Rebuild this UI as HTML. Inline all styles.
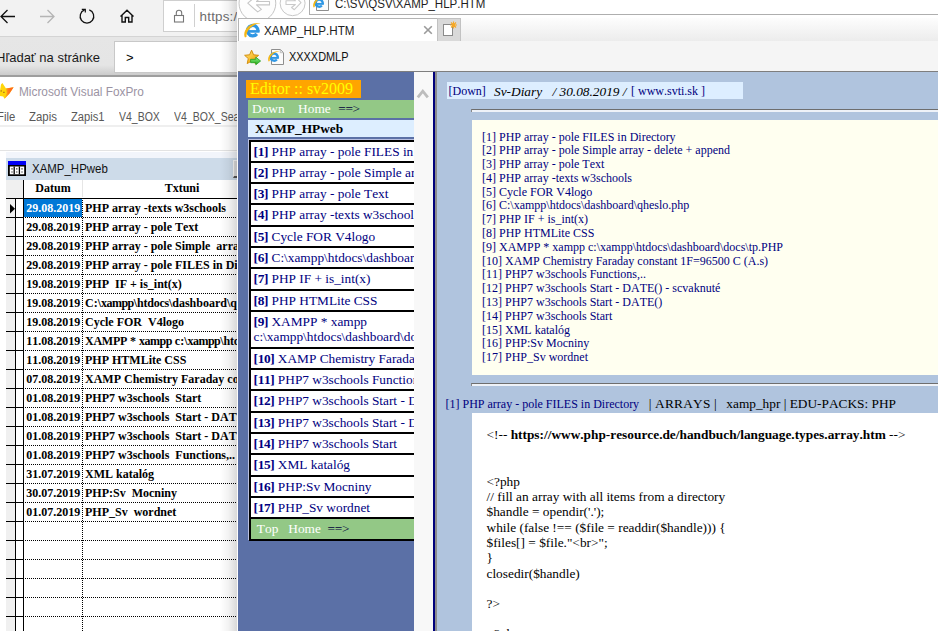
<!DOCTYPE html>
<html lang="sk">
<head>
<meta charset="utf-8">
<title>XAMP_HLP.HTM</title>
<style>
*{box-sizing:border-box;margin:0;padding:0;font-kerning:none!important}
html,body{width:938px;height:631px;overflow:hidden;background:#fff}
body{font-kerning:none;font-variant-ligatures:none;position:relative;font-family:"Liberation Sans",sans-serif;font-size:12px;color:#000}
.abs{position:absolute}
.ser{font-family:"Liberation Serif",serif}
/* ---------- Edge browser (background) ---------- */
#edgebar{left:0;top:0;width:938px;height:36px;background:#f2f2f2}
#edgeline{left:0;top:36px;width:938px;height:1px;background:#d4d4d4}
#addr{left:163px;top:0;width:200px;height:32px;background:#fff;border:1px solid #cfcfcf}
#addrdiv{left:194px;top:4px;width:1px;height:23px;background:#d0d0d0}
#https{left:199.6px;top:6.6px;font-size:13.4px;letter-spacing:.2px;line-height:20px;color:#6c6c6c;white-space:nowrap}
#findbar{left:0;top:37px;width:938px;height:39px;background:linear-gradient(#e6e6e6 0,#e5e5e5 72%,#c9c9c9 100%)}
#findline{left:0;top:75.4px;width:938px;height:1.3px;background:#9e9e9e}
#findlbl{left:-4px;top:50px;font-size:13px;line-height:16px;color:#1a1a1a;white-space:nowrap}
#findbox{left:114px;top:41px;width:300px;height:32px;background:#fff;border:1px solid #c8c8c8}
#findgt{left:126px;top:50px;font-size:13px;line-height:16px;color:#000}
/* ---------- FoxPro ---------- */
#foxtitle{left:19px;top:84px;transform-origin:0 50%;transform:scaleX(.985);font-size:12px;line-height:16px;color:#9b93a3;white-space:nowrap}
#foxmenu{left:0;top:109px;font-size:12px;line-height:16px;color:#585858;white-space:nowrap}
#foxmenu span{position:absolute;top:0;transform-origin:0 50%}
#menuline{left:0;top:125px;width:938px;height:2px;background:#efefef}
#mdiline{left:0;top:150px;width:938px;height:1px;background:#e3e3e3}
#childtitle{left:6px;top:158px;width:300px;height:22px;background:#cddbe9}
#childglow{left:6px;top:152px;width:300px;height:6px;background:#f2f5fb}
#childbtn{left:233px;top:160px;width:20px;height:18px;background:#dcdcdc;border:1px solid #f8f8f8;border-bottom:2px solid #555}
#childname{left:32px;top:161px;font-size:12px;transform-origin:0 50%;transform:scaleX(.955);line-height:16px;color:#111;white-space:nowrap}
#grid{left:6px;top:180px;width:300px;height:451px;background:#fff}
#ghead{left:0;top:0;width:300px;height:19px;background:#fff;border-bottom:1.4px solid #000}
#gheadm{left:0;top:0;width:17px;height:18px;background:#f0f0f0}
#gheadv{left:76px;top:0;width:1px;height:17px;background:#e6e6e6}
.gh{position:absolute;top:0;height:17px;font:bold 12px/17px "Liberation Serif",serif;text-align:center}
.row{position:absolute;left:0;width:300px;height:19px;border-bottom:1px dotted #000;font:bold 12px/18px "Liberation Serif",serif;white-space:pre}
.row .m{position:absolute;left:0;top:0;width:10px;height:19px;background:#f0f0f0;border-bottom:1px solid #000;border-right:1px solid #000}
.row .m2{position:absolute;left:10px;top:0;width:8px;height:19px;background:#fff;border-bottom:1px solid #000}
.row .d{position:absolute;left:18px;top:0;width:58px;height:18px;padding-left:2.3px}
.row .t{position:absolute;left:79px;top:0;height:18px}
#vl1{left:22.6px;top:180px;width:1.5px;height:451px;background:#000}
#vl2{left:82px;top:198px;width:0;height:433px;border-left:1px dotted #000}
#vl2h{left:82px;top:180px;width:1px;height:18px;background:#fff}
/* ---------- IE window ---------- */
#ieshadow{left:220px;top:0;width:17px;height:631px;background:linear-gradient(90deg,rgba(0,0,0,0),rgba(0,0,0,.05) 50%,rgba(0,0,0,.15))}
#ie{left:237px;top:0;width:701px;height:631px;background:#fff;border-left:1px solid #fbfbfb;overflow:hidden}
#ie .abs{position:absolute}
#ienav{left:0;top:0;width:701px;height:18px;background:#fff}
#ieaddr{left:71px;top:-6px;width:640px;height:21px;background:#fff;border:1px solid #aeaeae}
#ieurl{left:97px;top:-4.4px;font-size:12px;line-height:16px;transform-origin:0 50%;transform:scaleX(.96);color:#1e1e1e;white-space:nowrap}
#ietabrow{left:0;top:18px;width:701px;height:23px;background:linear-gradient(#fdfdfd,#ececec)}
#ietab{left:0;top:18px;width:200px;height:23px;background:#fff;border:1px solid #b4b4b4;border-bottom:0}
#ietabtxt{left:26px;top:23.7px;font-size:12px;transform-origin:0 50%;transform:scaleX(.97);line-height:15px;color:#222;white-space:nowrap}
#ienewtab{left:199px;top:18px;width:24px;height:23px;background:#d9d9d9;border:1px solid #c2c2c2;border-bottom:0}
#iefav{left:0;top:41px;width:701px;height:31px;background:#f5f5f5}
#iefavtxt{left:51px;top:49.7px;font-size:12px;transform-origin:0 50%;transform:scaleX(.91);line-height:15px;color:#111;white-space:nowrap}
#iecline{left:0;top:71px;z-index:5;width:701px;height:1px;background:#7e7e7e}
#lf{left:-1px;top:71px;width:177px;height:560px;background:#5b70a6;overflow:hidden}
#lfed{left:9px;top:9px;width:115px;height:18px;background:#ffa500;color:#ffff00;font-size:16px;line-height:17px;padding-left:4px;white-space:nowrap}
#lfnav{left:11px;top:29px;width:170px;height:18px;background:#93c886;color:#fff;font-size:13.33px;line-height:17px;padding-left:4px;white-space:nowrap}
#lfnav b{font-weight:normal;color:#00003a;letter-spacing:-.3px}
#lfttl{left:11px;top:49px;width:170px;height:17px;background:#ddeeff;color:#000;font-weight:bold;font-size:13.33px;line-height:17px;padding-left:7px;white-space:nowrap}
#lftbl{left:12px;top:68.5px;width:170px;border-top:2px solid #000;border-left:2px solid #000;background:#000;box-shadow:-1px -1px 0 #b9bfe0}
.lr{background:#fff;border-bottom:2px solid #000;padding:2px 0 2px 2.5px;font-size:13.33px;line-height:15.33px;color:#000080;white-space:nowrap;overflow:hidden;height:21.33px}
.lr.two{height:36.67px}
.lr b{letter-spacing:-.3px}
.lr.g{background:#93c886;color:#fff}
.lr.g b{font-weight:normal;color:#00003a;letter-spacing:-.3px}
#lfsb{left:176px;top:71px;width:19px;height:560px;background:#f8f8f8}
#frsep1{left:195px;top:71px;width:2px;height:560px;background:#00007c}
#frsep2{left:197px;top:71px;width:2px;height:560px;background:#8c8c8c}
#rf{left:199px;top:71px;width:502px;height:560px;background:#b0c4de;overflow:hidden}
.nv{color:#000080}
#rfh1{left:10px;top:11px;width:296px;height:17px;background:#ddeeff;font-size:12px;line-height:19px;white-space:nowrap}
#rfh1 span,#rfh1 i{position:absolute;top:0}
#rfh1 i{font-size:13.33px}
.hr{left:34px;width:470px;height:3px;border-top:1px solid #6e6e6e;border-left:1px solid #8a8a8a;background:#eef2f8}
#rflist{left:35px;top:49px;width:470px;height:255px;background:#fffff0;color:#000080;font-size:12px;line-height:13.79px;padding:10.5px 0 0 10px;white-space:nowrap}
#rfh2{left:8.5px;top:325px;font-size:13.33px;line-height:16px;white-space:nowrap}
.s12{font-size:12px}
#rfcode{left:35px;top:341.5px;width:470px;height:300px;background:#fff;font-size:13.33px;line-height:15.33px;padding:14px 0 0 14.5px;white-space:pre}
#rfcode .l1{display:block;height:16.5px}

</style>
</head>
<body>
<!-- Edge toolbar -->
<div id="edgebar" class="abs"></div>
<div id="edgeline" class="abs"></div>
<svg class="abs" style="left:0;top:0" width="160" height="36" viewBox="0 0 160 36" fill="none">
  <path d="M15 16.5H1.2M7.5 10L1 16.5L7.5 23" stroke="#111" stroke-width="1.3"/>
  <path d="M40 16.5H54M47.5 10L54 16.5L47.5 23" stroke="#b5b5b5" stroke-width="1.3"/>
  <path d="M89.3 9.9A6.8 6.8 0 1 1 84.6 9.9" stroke="#111" stroke-width="1.3"/>
  <path d="M81.8 9.3H85.3V12.6" stroke="#111" stroke-width="1.2"/>
  <path d="M120.5 16.5L127 10.3L133.5 16.5M122 15.5V22H125.3V17.5H128.7V22H132V15.5" stroke="#111" stroke-width="1.4"/>
</svg>
<div id="addr" class="abs"></div>
<svg class="abs" style="left:172px;top:8px" width="14" height="16" viewBox="0 0 14 16" fill="none">
  <rect x="2.5" y="7.5" width="9" height="6.5" stroke="#777" stroke-width="1.1"/>
  <path d="M4.3 7.5V5A2.7 2.7 0 0 1 9.7 5V7.5" stroke="#777" stroke-width="1.1"/>
</svg>
<div id="addrdiv" class="abs"></div>
<div id="https" class="abs">https://</div>
<!-- Find bar -->
<div id="findbar" class="abs"></div>
<div id="findline" class="abs"></div>
<div id="findlbl" class="abs">Hľadať na stránke</div>
<div id="findbox" class="abs"></div>
<div id="findgt" class="abs">&gt;</div>
<!-- FoxPro -->
<svg class="abs" style="left:0;top:80px" width="16" height="22" viewBox="0 0 16 22">
  <defs><linearGradient id="fx" x1="0" y1="0" x2="1" y2="0"><stop offset="0" stop-color="#ffc414"/><stop offset=".45" stop-color="#ff7a1c"/><stop offset="1" stop-color="#ff5a1a"/></linearGradient></defs>
  <path d="M0 10.5L1 4.6L2.4 3L6 8.6L13.6 7.3L9.5 13.5L4.5 18.7L3.2 16.6L0 16Z" fill="#ffd60a"/>
  <path d="M6 8.6L13.6 7.3L9.5 13.5L4.5 18.7L6.8 13Z" fill="url(#fx)"/>
  <path d="M1.2 10.3V11.6M3.2 12.3H4.6" stroke="#8a4a2a" stroke-width=".9"/>
</svg>
<div id="foxtitle" class="abs">Microsoft Visual FoxPro</div>
<div id="foxmenu" class="abs"><span style="left:-3.5px;transform:scaleX(.94)">File</span><span style="left:28.5px;transform:scaleX(.95)">Zapis</span><span style="left:70.5px;transform:scaleX(.93)">Zapis1</span><span style="left:119px;transform:scaleX(.875)">V4_BOX</span><span style="left:174px;transform:scaleX(.875)">V4_BOX_Search</span></div>
<div id="menuline" class="abs"></div>
<div id="mdiline" class="abs"></div>
<div id="childglow" class="abs"></div><div id="childtitle" class="abs"></div><div id="childbtn" class="abs"></div>
<svg class="abs" style="left:8px;top:161px" width="18" height="15" viewBox="0 0 18 15">
  <rect x="0" y="0" width="18" height="15" fill="#000"/>
  <rect x="0" y="0" width="18" height="4" fill="#0000f6"/>
  <rect x="1.8" y="5.5" width="14.4" height="7.8" fill="#fff"/>
  <path d="M6.2 5.5V13.3M11.4 5.5V13.3" stroke="#000" stroke-width="1.3"/>
  <path d="M4 7.2V8.4M4 10.4V11.6M8.8 7.2V8.4M8.8 10.4V11.6M14 7.2V8.4M14 10.4V11.6" stroke="#000" stroke-width="1.1"/>
</svg>
<div id="childname" class="abs">XAMP_HPweb</div>
<div id="grid" class="abs">
  <div id="ghead" class="abs"></div><div id="gheadm" class="abs"></div><div id="gheadv" class="abs"></div>
  <div class="gh" style="left:18px;width:58px">Datum</div>
  <div class="gh" style="left:77px;width:198px">Txtuni</div>
  <div class="row" style="top:19px"><div class="m"></div><div class="m2"></div><svg class="abs" style="left:4px;top:5px" width="6" height="10" viewBox="0 0 6 10"><path d="M0 0L5 4.7L0 9.4Z" fill="#000"/></svg><div class="d" style="background:#0078d7;color:#fff">29.08.2019</div><div class="t">PHP array -texts w3schools</div></div>
  <div class="row" style="top:38px"><div class="m"></div><div class="m2"></div><div class="d">29.08.2019</div><div class="t">PHP array - pole Text</div></div>
  <div class="row" style="top:57px"><div class="m"></div><div class="m2"></div><div class="d">29.08.2019</div><div class="t">PHP array - pole Simple  array - delete + append</div></div>
  <div class="row" style="top:76px"><div class="m"></div><div class="m2"></div><div class="d">29.08.2019</div><div class="t">PHP array - pole FILES in Directory</div></div>
  <div class="row" style="top:95px"><div class="m"></div><div class="m2"></div><div class="d">19.08.2019</div><div class="t">PHP  IF + is_int(x)</div></div>
  <div class="row" style="top:114px"><div class="m"></div><div class="m2"></div><div class="d">19.08.2019</div><div class="t">C:\<span style="letter-spacing:-.52px">xampp</span>\<span style="letter-spacing:-.25px">htdocs</span>\dashboard\qheslo.php</div></div>
  <div class="row" style="top:133px"><div class="m"></div><div class="m2"></div><div class="d">19.08.2019</div><div class="t">Cycle FOR  V4logo</div></div>
  <div class="row" style="top:152px"><div class="m"></div><div class="m2"></div><div class="d">11.08.2019</div><div class="t"><span style="letter-spacing:-.25px">XAMPP</span> * <span style="letter-spacing:-.52px">xampp</span> c:\<span style="letter-spacing:-.52px">xampp</span>\<span style="letter-spacing:-.25px">htdocs</span>\dashboard\docs\tp.PHP</div></div>
  <div class="row" style="top:171px"><div class="m"></div><div class="m2"></div><div class="d">11.08.2019</div><div class="t">PHP HTMLite CSS</div></div>
  <div class="row" style="top:190px"><div class="m"></div><div class="m2"></div><div class="d">07.08.2019</div><div class="t">XAMP Chemistry Faraday constant 1F=96500 C (A.s)</div></div>
  <div class="row" style="top:209px"><div class="m"></div><div class="m2"></div><div class="d">01.08.2019</div><div class="t">PHP7 w3schools  Start</div></div>
  <div class="row" style="top:228px"><div class="m"></div><div class="m2"></div><div class="d">01.08.2019</div><div class="t">PHP7 w3schools  Start - DATE() - scvaknuté</div></div>
  <div class="row" style="top:247px"><div class="m"></div><div class="m2"></div><div class="d">01.08.2019</div><div class="t">PHP7 w3schools  Start - DATE()</div></div>
  <div class="row" style="top:266px"><div class="m"></div><div class="m2"></div><div class="d">01.08.2019</div><div class="t">PHP7 w3schools  Functions,..</div></div>
  <div class="row" style="top:285px"><div class="m"></div><div class="m2"></div><div class="d">31.07.2019</div><div class="t">XML katalóg</div></div>
  <div class="row" style="top:304px"><div class="m"></div><div class="m2"></div><div class="d">30.07.2019</div><div class="t">PHP:Sv  Mocniny</div></div>
  <div class="row" style="top:323px"><div class="m"></div><div class="m2"></div><div class="d">01.07.2019</div><div class="t">PHP_Sv  wordnet</div></div>
  <div class="row" style="top:342px"><div class="m"></div><div class="m2"></div><div class="d"></div><div class="t"></div></div>
  <div class="row" style="top:361px"><div class="m"></div><div class="m2"></div><div class="d"></div><div class="t"></div></div>
  <div class="row" style="top:380px"><div class="m"></div><div class="m2"></div><div class="d"></div><div class="t"></div></div>
  <div class="row" style="top:399px"><div class="m"></div><div class="m2"></div><div class="d"></div><div class="t"></div></div>
  <div class="row" style="top:418px"><div class="m"></div><div class="m2"></div><div class="d"></div><div class="t"></div></div>
  <div class="row" style="top:437px"><div class="m"></div><div class="m2"></div><div class="d"></div><div class="t"></div></div>
  <div class="row" style="top:456px"><div class="m"></div><div class="m2"></div><div class="d"></div><div class="t"></div></div>
</div>
<div id="vl1" class="abs"></div>
<div id="vl2" class="abs"></div>
<!-- ================= IE window ================= -->
<div id="ieshadow" class="abs"></div>
<div id="ie" class="abs">
  <!-- nav strip -->
  <div id="ienav" class="abs"></div>
  <svg class="abs" style="left:-1px;top:0" width="75" height="24" viewBox="0 0 75 24" fill="none">
    <circle cx="20.4" cy="3.2" r="18.4" fill="#fdfdfd" stroke="#c4c4c4" stroke-width="1"/>
    <path d="M10.8 3.2L20.7 11.9L24.4 9.4L19.5 4.9H32.5V1.5H19.5L24.4 -3L20.7 -5.5Z" fill="#fff" stroke="#c6c6c6" stroke-width="1.1" stroke-linejoin="round"/>
    <circle cx="55.6" cy="3.2" r="12.5" fill="#fdfdfd" stroke="#c8c8c8" stroke-width="1"/>
    <path d="M64 2.6L57.3 9.7L54.6 7.5L58.4 4.5H49V0.7H58.4L54.6 -2.3L57.3 -4.5Z" fill="#fff" stroke="#cacaca" stroke-width="1.1" stroke-linejoin="round"/>
  </svg>
  <div id="ieaddr" class="abs"></div>
  <svg class="abs" style="left:75px;top:-6px" width="18" height="18" viewBox="0 0 18 18" fill="none"><path d="M3.5 1.5H12.3L15.5 4.7V16.5H3.5Z" fill="#fbfbfb" stroke="#8e8e8e"/><path d="M9.60 9.90A3.6 3.6 0 1 0 8.84 11.42" stroke="#2f97e4" stroke-width="2.4" fill="none"/><path d="M3.00 9.90H10.80" stroke="#2f97e4" stroke-width="1.92" fill="none"/><path d="M0.6 13.6C-1.8 8.4 5 2 11.4 3.5C6.4 3.6 1 8.4 1.8 13Z" fill="#f5b716"/></svg>
  <div id="ieurl" class="abs">C:\SV\QSV\XAMP_HLP.HTM</div>
  <!-- tab row -->
  <div id="ietabrow" class="abs"></div>
  <div id="ietab" class="abs"></div>
  <svg class="abs" style="left:6px;top:21px" width="18" height="18" viewBox="0 0 18 18" fill="none"><path d="M13.90 10.40A5.2 5.2 0 1 0 12.80 12.90" stroke="#2f97e4" stroke-width="3.3" fill="none"/><path d="M4.10 10.40H15.55" stroke="#2f97e4" stroke-width="2.64" fill="none"/><path d="M1 16.6C-2.6 9.6 7 0 16.6 2.2C9.6 2.2 1.6 9.4 2.6 15.8Z" fill="#f5b716"/></svg>
  <div id="ietabtxt" class="abs">XAMP_HLP.HTM</div>
  <svg class="abs" style="left:185px;top:25px" width="10" height="10" viewBox="0 0 10 10"><path d="M1.2 1.2L8.8 8.8M8.8 1.2L1.2 8.8" stroke="#9a9a9a" stroke-width="1.6"/></svg>
  <div id="ienewtab" class="abs"></div>
  <svg class="abs" style="left:204px;top:21px" width="16" height="16" viewBox="0 0 16 16" fill="none">
    <rect x="1.5" y="3.5" width="9" height="11" fill="#fff" stroke="#8a8a8a"/>
    <path d="M11.5 0.5V7.5M8 4H15M9 1.5L14 6.5M14 1.5L9 6.5" stroke="#f7a823" stroke-width="1.1"/>
  </svg>
  <!-- favorites bar -->
  <div id="iefav" class="abs"></div>
  <svg class="abs" style="left:6px;top:49px" width="18" height="17" viewBox="0 0 18 17" fill="none"><defs><linearGradient id="sg" x1="0" y1="0" x2="1" y2="1"><stop offset="0" stop-color="#ffe98a"/><stop offset=".55" stop-color="#f9bd2c"/><stop offset="1" stop-color="#e08a0a"/></linearGradient><linearGradient id="gg" x1="0" y1="0" x2="0" y2="1"><stop offset="0" stop-color="#8df07f"/><stop offset="1" stop-color="#1faa1c"/></linearGradient></defs><path d="M7.6 1.2L9.6 5.8L14.6 6.3L10.9 9.6L12 14.6L7.6 12L3.2 14.6L4.3 9.6L0.6 6.3L5.6 5.8Z" fill="url(#sg)" stroke="#d4900f" stroke-width="1" stroke-linejoin="round"/><path d="M6.6 10.3H11.8V8.2L16.6 12L11.8 15.8V13.7H6.6Z" fill="url(#gg)" stroke="#23a021" stroke-width="0.8" stroke-linejoin="round"/></svg>
  <svg class="abs" style="left:30px;top:48px" width="18" height="18" viewBox="0 0 18 18" fill="none"><path d="M3.5 1.5H12.3L15.5 4.7V16.5H3.5Z" fill="#fbfbfb" stroke="#8e8e8e"/><path d="M12.3 1.5V4.7H15.5" stroke="#b0b0b0" stroke-width=".8"/><path d="M9.60 9.90A3.6 3.6 0 1 0 8.84 11.42" stroke="#2f97e4" stroke-width="2.4" fill="none"/><path d="M3.00 9.90H10.80" stroke="#2f97e4" stroke-width="1.92" fill="none"/><path d="M0.6 13.6C-1.8 8.4 5 2 11.4 3.5C6.4 3.6 1 8.4 1.8 13Z" fill="#f5b716"/></svg>
  <div id="iefavtxt" class="abs">XXXXDMLP</div>
  <div id="iecline" class="abs"></div>
  <!-- left frame -->
  <div id="lf" class="abs">
    <div id="lfed" class="abs ser">Editor :: sv2009</div>
    <div id="lfnav" class="abs ser">Down<span style="margin-left:13.5px">Home</span><b style="margin-left:7.5px">==&gt;</b></div>
    <div id="lfttl" class="abs ser">XAMP_HPweb</div>
    <div id="lftbl" class="abs ser">
<div class="lr"><b>[1]</b> PHP array - pole FILES in Directory</div>
<div class="lr"><b>[2]</b> PHP array - pole Simple array - delete + append</div>
<div class="lr"><b>[3]</b> PHP array - pole Text</div>
<div class="lr"><b>[4]</b> PHP array -texts w3schools</div>
<div class="lr"><b>[5]</b> Cycle FOR V4logo</div>
<div class="lr"><b>[6]</b> C:\xampp\htdocs\dashboard\qheslo.php</div>
<div class="lr"><b>[7]</b> PHP IF + is_int(x)</div>
<div class="lr"><b>[8]</b> PHP HTMLite CSS</div>
<div class="lr two"><b>[9]</b> XAMPP * xampp<br>c:\xampp\htdocs\dashboard\docs\tp.PHP</div>
<div class="lr"><b>[10]</b> XAMP Chemistry Faraday constant 1F=96500 C (A.s)</div>
<div class="lr"><b>[11]</b> PHP7 w3schools Functions,..</div>
<div class="lr"><b>[12]</b> PHP7 w3schools Start - DATE() - scvaknuté</div>
<div class="lr"><b>[13]</b> PHP7 w3schools Start - DATE()</div>
<div class="lr"><b>[14]</b> PHP7 w3schools Start</div>
<div class="lr"><b>[15]</b> XML katalóg</div>
<div class="lr"><b>[16]</b> PHP:Sv Mocniny</div>
<div class="lr"><b>[17]</b> PHP_Sv wordnet</div>
<div class="lr g">&nbsp;Top&nbsp;&nbsp; Home&nbsp; <b>==&gt;</b></div>
    </div>
  </div>
  <div id="lfsb" class="abs"></div>
  <svg class="abs" style="left:178px;top:87px" width="14" height="12" viewBox="0 0 14 12" fill="none"><path d="M1.8 10.3L6.8 4.2L11.8 10.3" stroke="#bdbdbd" stroke-width="2.8"/></svg>
  <div id="frsep1" class="abs"></div>
  <div id="frsep2" class="abs"></div>
  <!-- right frame -->
  <div id="rf" class="abs ser">
    <div id="rfh1" class="abs"><span class="nv" style="left:1.5px">[Down]</span><i style="left:47px">Sv-Diary</i><i style="left:105.5px">/ 30.08.2019 /</i><span class="nv" style="left:184px">[ www.svti.sk ]</span></div>
    <div class="hr abs" style="top:38px"></div>
    <div id="rflist" class="abs">
[1] PHP array - pole FILES in Directory<br>[2] PHP array - pole Simple array - delete + append<br>[3] PHP array - pole Text<br>[4] PHP array -texts w3schools<br>[5] Cycle FOR V4logo<br>[6] C:\xampp\htdocs\dashboard\qheslo.php<br>[7] PHP IF + is_int(x)<br>[8] PHP HTMLite CSS<br>[9] XAMPP * xampp c:\xampp\htdocs\dashboard\docs\tp.PHP<br>[10] XAMP Chemistry Faraday constant 1F=96500 C (A.s)<br>[11] PHP7 w3schools Functions,..<br>[12] PHP7 w3schools Start - DATE() - scvaknuté<br>[13] PHP7 w3schools Start - DATE()<br>[14] PHP7 w3schools Start<br>[15] XML katalóg<br>[16] PHP:Sv Mocniny<br>[17] PHP_Sv wordnet
    </div>
    <div class="hr abs" style="top:312px"></div>
    <div id="rfh2" class="abs"><span class="nv s12">[1] PHP array - pole FILES in Directory</span><span style="margin-left:9.5px;letter-spacing:.23px">| ARRAYS |</span><span style="margin-left:9.3px">xamp_hpr | EDU-PACKS: PHP</span></div>
    <div id="rfcode" class="abs"><span class="l1">&lt;!-- <b>https://www.php-resource.de/handbuch/language.types.array.htm</b> --&gt;</span>

&lt;?php
// fill an array with all items from a directory
$handle = opendir('.');
while (false !== ($file = readdir($handle))) {
$files[] = $file."&lt;br&gt;";
}
closedir($handle)

?&gt;

<span style="position:relative;top:-1px">&lt;?php</span></div>
  </div>
</div>

</body>
</html>
